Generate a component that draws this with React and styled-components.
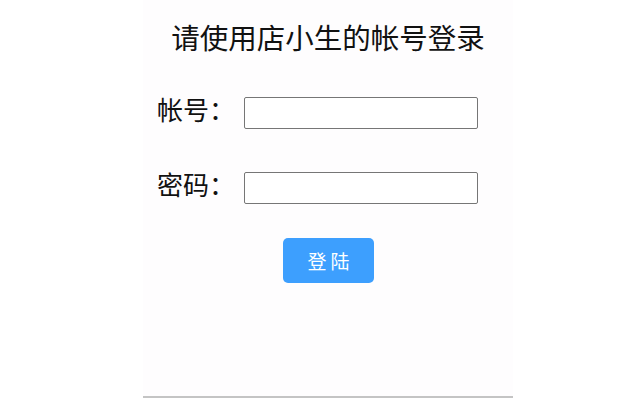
import React from 'react';
import styled, { createGlobalStyle } from 'styled-components';

const GlobalStyle = createGlobalStyle`
  html, body {
    margin: 0;
    padding: 0;
    background: #ffffff;
  }
  body {
    font-family: "Noto Sans CJK SC", "Noto Sans", sans-serif;
    color: #111;
  }
`;

const Page = styled.div`
  width: 640px;
  height: 400px;
  overflow: hidden;
`;

const Panel = styled.div`
  width: 370px;
  height: 398px;
  margin-left: 143px;
  background: #fefdfe;
  border-bottom: 2px solid #c4c4c4;
  display: flex;
  flex-direction: column;
  align-items: center;
  box-sizing: border-box;
`;

const Title = styled.h2`
  margin: 17px 0 0;
  font-size: 28.5px;
  font-weight: 400;
  line-height: 40px;
  color: #111;
  white-space: nowrap;
`;

const Form = styled.form`
  align-self: stretch;
  display: flex;
  flex-direction: column;
  gap: 44px;
  padding-left: 14px;
  margin-top: 40px;
`;

const Row = styled.div`
  display: flex;
  align-items: center;
  height: 31px;
`;

const Label = styled.label`
  width: 87px;
  font-size: 26px;
  line-height: 31px;
  padding-bottom: 9px;
  color: #111;
  white-space: nowrap;
`;

const Input = styled.input`
  width: 234px;
  height: 32px;
  box-sizing: border-box;
  border: 1px solid #767676;
  border-radius: 2px;
  background: #fff;
  padding: 0 6px;
  font-size: 16px;
`;

const Button = styled.button`
  margin-top: 35px;
  margin-left: 1px;
  width: 91px;
  height: 45px;
  border: none;
  border-radius: 5px;
  background: #3d9ffe;
  color: #fff;
  font-family: "Noto Sans CJK SC", sans-serif;
  font-size: 19px;
  letter-spacing: 4px;
  text-indent: 4px;
  cursor: pointer;
`;

export default function App() {
  return (
    <Page>
      <GlobalStyle />
      <Panel>
        <Title>请使用店小生的帐号登录</Title>
        <Form onSubmit={(e) => e.preventDefault()}>
          <Row>
            <Label htmlFor="account">帐号：</Label>
            <Input id="account" type="text" />
          </Row>
          <Row>
            <Label htmlFor="password">密码：</Label>
            <Input id="password" type="password" />
          </Row>
        </Form>
        <Button type="button">登陆</Button>
      </Panel>
    </Page>
  );
}
